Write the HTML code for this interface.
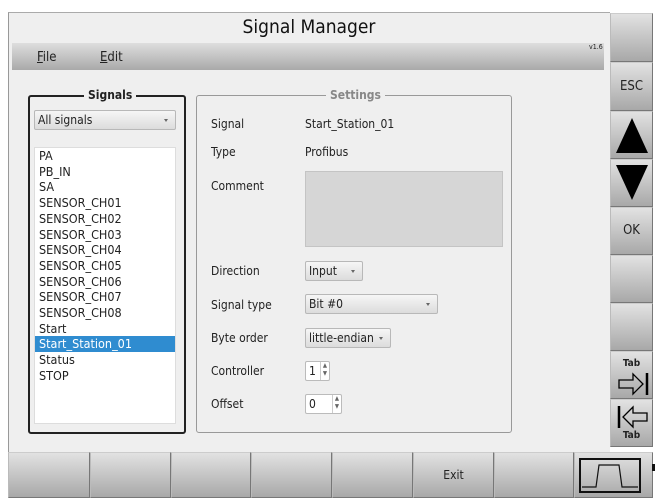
<!DOCTYPE html>
<html><head><meta charset="utf-8"><style>
*{box-sizing:border-box;margin:0;padding:0}
body{width:656px;height:503px;background:#fff;position:relative;overflow:hidden;font-family:"DejaVu Sans Condensed","DejaVu Sans","Liberation Sans",sans-serif;font-size:12px;color:#222}
.a{position:absolute}
.frame{left:8px;top:12px;width:602px;height:486px;background:#efefef;border-top:1px solid #aaa;border-left:1px solid #999}
.menu{left:12px;top:43px;width:592px;height:27px;background:linear-gradient(#dedede,#a9a9a9)}
.btn{background:linear-gradient(#e2e2e2,#a8a8a8);border:1px solid #888;border-color:#ccc #777 #777 #bbb}
.combo{background:linear-gradient(#f6f6f6,#dcdcdc);border:1px solid #b8b8b8;border-radius:2px;padding-left:3px;line-height:19px;font-size:12px}
.combo:after{content:"";position:absolute;right:7px;top:8px;border:2.5px solid transparent;border-top:3px solid #666}
.lbl{left:211px;font-size:12px}
.spin{background:#fff;border:1px solid #bbb;border-radius:2px;padding-left:3px;line-height:19px}
.spin i{position:absolute;right:0;top:0;width:9px;height:18px;border-left:1px solid #ccc;font-style:normal;font-size:6px;line-height:8px;text-align:center;color:#666}
.li{left:39px;font-size:12.5px;line-height:15.7px}
</style></head><body>
<div class="a frame"></div>
<div class="a" style="left:8px;top:14px;width:602px;text-align:center;font-size:19px;line-height:26px;color:#111">Signal Manager</div>
<div class="a menu"></div>
<div class="a" style="left:37px;top:50px;font-size:13px"><u>F</u>ile</div>
<div class="a" style="left:100px;top:50px;font-size:13px"><u>E</u>dit</div>
<div class="a" style="left:589px;top:43px;font-size:7px">v1.6</div>

<div class="a" style="left:28px;top:95px;width:158px;height:339px;border:2px solid #222;border-radius:3px"></div>
<div class="a" style="left:84px;top:88px;padding:0 4px;background:#efefef;font-weight:bold;font-size:12px">Signals</div>
<div class="a combo" style="left:34px;top:110px;width:142px;height:20px">All signals</div>
<div class="a" style="left:34px;top:147px;width:142px;height:277px;background:#fff;border:1px solid #ddd"></div>
<div class="a" style="left:35px;top:336px;width:140px;height:16px;background:#2f8cd0"></div>
<div class="a li" style="top:148px">PA<br>PB_IN<br>SA<br>SENSOR_CH01<br>SENSOR_CH02<br>SENSOR_CH03<br>SENSOR_CH04<br>SENSOR_CH05<br>SENSOR_CH06<br>SENSOR_CH07<br>SENSOR_CH08<br>Start<br><span style="color:#fff">Start_Station_01</span><br>Status<br>STOP</div>

<div class="a" style="left:196px;top:95px;width:316px;height:338px;border:1px solid #999;border-radius:3px"></div>
<div class="a" style="left:326px;top:88px;padding:0 4px;background:#efefef;color:#888;font-weight:bold;font-size:12px">Settings</div>
<div class="a lbl" style="top:117px">Signal</div><div class="a" style="left:305px;top:117px">Start_Station_01</div>
<div class="a lbl" style="top:145px">Type</div><div class="a" style="left:305px;top:145px">Profibus</div>
<div class="a lbl" style="top:179px">Comment</div>
<div class="a" style="left:305px;top:171px;width:198px;height:76px;background:#d6d6d6;border:1px solid #c4c4c4"></div>
<div class="a lbl" style="top:264px">Direction</div><div class="a combo" style="left:305px;top:261px;width:58px;height:20px">Input</div>
<div class="a lbl" style="top:298px">Signal type</div><div class="a combo" style="left:305px;top:294px;width:133px;height:20px">Bit #0</div>
<div class="a lbl" style="top:331px">Byte order</div><div class="a combo" style="left:305px;top:328px;width:86px;height:20px">little-endian</div>
<div class="a lbl" style="top:364px">Controller</div><div class="a spin" style="left:305px;top:361px;width:25px;height:20px">1<i>▲<br>▼</i></div>
<div class="a lbl" style="top:397px">Offset</div><div class="a spin" style="left:305px;top:394px;width:37px;height:20px">0<i>▲<br>▼</i></div>

<!-- right buttons -->
<div class="a btn" style="left:610px;top:13px;width:43px;height:49px"></div>
<div class="a btn" style="left:610px;top:62px;width:43px;height:49px;text-align:center;line-height:47px;font-size:13px">ESC</div>
<div class="a btn" style="left:610px;top:111px;width:43px;height:48px"><div class="a" style="left:5px;top:6px;border:16px solid transparent;border-top:0;border-bottom:35px solid #000"></div></div>
<div class="a btn" style="left:610px;top:159px;width:43px;height:48px"><div class="a" style="left:5px;top:5px;border:16px solid transparent;border-bottom:0;border-top:35px solid #000"></div></div>
<div class="a btn" style="left:610px;top:207px;width:43px;height:48px;text-align:center;line-height:46px;font-size:13px">OK</div>
<div class="a btn" style="left:610px;top:255px;width:43px;height:48px"></div>
<div class="a btn" style="left:610px;top:303px;width:43px;height:48px"></div>
<div class="a btn" style="left:610px;top:351px;width:43px;height:48px"><div class="a" style="left:0;top:6px;width:41px;text-align:center;font-size:10px;font-weight:bold">Tab</div>
<svg class="a" style="left:6px;top:19px" width="34" height="26"><path d="M2 9h14v-6l10 10-10 10v-6H2z" fill="none" stroke="#000" stroke-width="1.3"/><path d="M30 2v22" stroke="#000" stroke-width="2.5"/></svg></div>
<div class="a btn" style="left:610px;top:399px;width:43px;height:48px"><svg class="a" style="left:5px;top:4px" width="34" height="26"><path d="M3 2v22" stroke="#000" stroke-width="2.5"/><path d="M31 9h-14v-6l-10 10 10 10v-6h14z" fill="none" stroke="#000" stroke-width="1.3"/></svg><div class="a" style="left:0;top:30px;width:41px;text-align:center;font-size:10px;font-weight:bold">Tab</div></div>

<!-- bottom bar -->
<div class="a btn" style="left:8px;top:452px;width:82px;height:46px"></div>
<div class="a btn" style="left:90px;top:452px;width:81px;height:46px"></div>
<div class="a btn" style="left:171px;top:452px;width:80px;height:46px"></div>
<div class="a btn" style="left:251px;top:452px;width:81px;height:46px"></div>
<div class="a btn" style="left:332px;top:452px;width:81px;height:46px"></div>
<div class="a btn" style="left:413px;top:452px;width:81px;height:46px;text-align:center;line-height:44px;font-size:12px">Exit</div>
<div class="a btn" style="left:494px;top:452px;width:80px;height:46px"></div>
<div class="a btn" style="left:574px;top:452px;width:79px;height:46px"><div class="a" style="left:4px;top:5px;width:62px;height:35px;border:2px solid #111"><svg width="58" height="31"><path d="M1 27h14l3-22h20l3 22h16" fill="none" stroke="#111" stroke-width="1.2"/></svg></div></div>
<div class="a" style="left:652px;top:464px;width:3px;height:7px;background:#111"></div>
</body></html>
